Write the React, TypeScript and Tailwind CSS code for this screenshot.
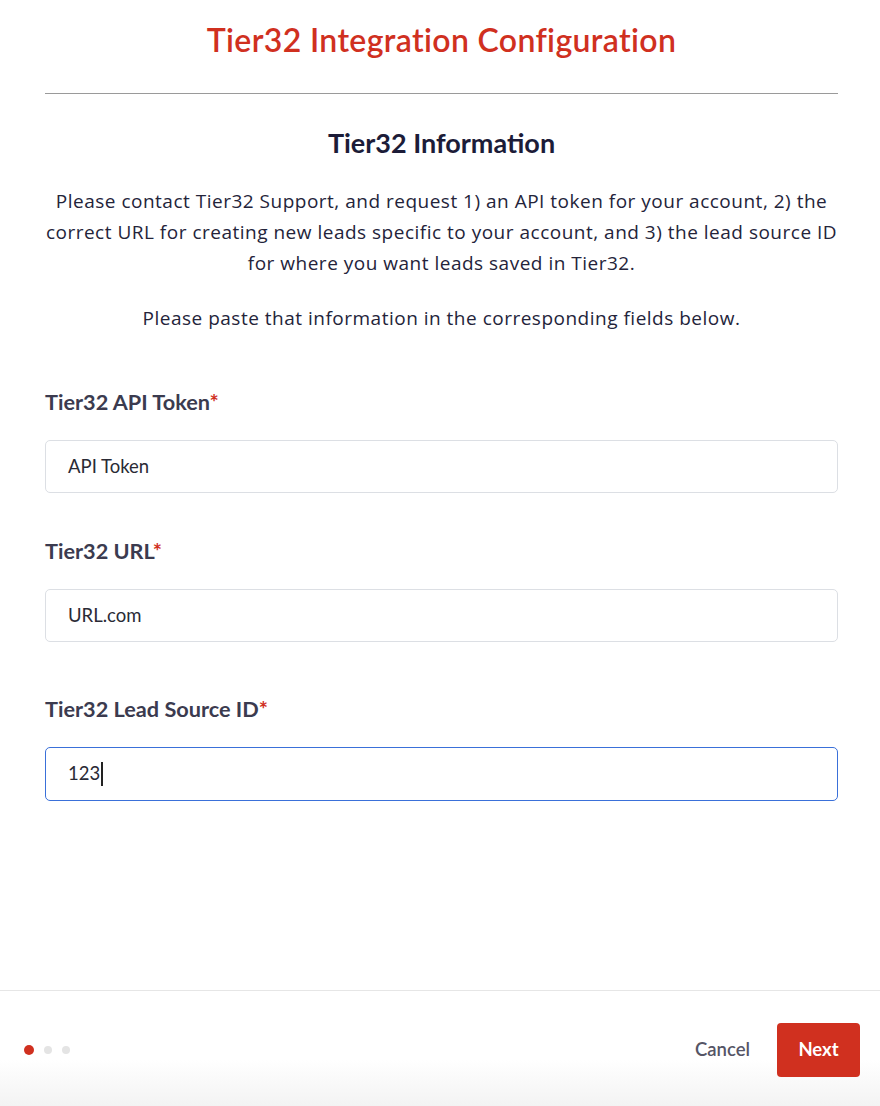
import React from "react";

const Label = ({ text }: { text: string }) => (
  <label className="text-[21.7px] font-bold text-[#3b3b4f] leading-[26px]">
    {text}
    <span className="text-[#d0301f]">*</span>
  </label>
);

const Field = ({ label, value }: { label: string; value: string }) => (
  <div className="flex flex-col">
    <Label text={label} />
    <div className="mt-[25px] h-[53px] rounded-[5px] border border-[#dcdfe4] bg-white flex items-center px-[22px] text-[18.5px] text-[#2a2a35]">
      {value}
    </div>
  </div>
);

const App = () => {
  return (
    <div className="w-[880px] h-[1106px] bg-white flex flex-col font-[family-name:Lato]">
      <div className="px-[45px] pr-[42px] flex-1">
        <h1 className="pt-[20px] text-center text-[32px] tracking-[0.35px] font-semibold text-[#d0301f] leading-[40px]">
          Tier32 Integration Configuration
        </h1>
        <div className="mt-[33px] h-[1px] bg-[#9a9a9a]" />
        <h2 className="mt-[32px] text-center text-[27px] font-bold text-[#1c1c38] leading-[34px]">
          Tier32 Information
        </h2>
        <p className="mt-[26px] text-center text-[19px] tracking-[0.5px] leading-[31px] text-[#24243a] font-[family-name:Open_Sans] whitespace-nowrap">
          Please contact Tier32 Support, and request 1) an API token for your account, 2) the
          <br />
          correct URL for creating new leads specific to your account, and 3) the lead source ID
          <br />
          for where you want leads saved in Tier32.
        </p>
        <p className="mt-[24px] text-center text-[19px] tracking-[0.5px] leading-[31px] text-[#24243a] font-[family-name:Open_Sans]">
          Please paste that information in the corresponding fields below.
        </p>
        <div className="mt-[55px] flex flex-col gap-[45px]">
          <Field label="Tier32 API Token" value="API Token" />
          <Field label="Tier32 URL" value="URL.com" />
          <div className="mt-[9px] flex flex-col">
            <Label text="Tier32 Lead Source ID" />
            <div className="mt-[25px] h-[54px] rounded-[5px] border border-[#3a70d9] bg-white flex items-center px-[22px] text-[18.5px] text-[#2a2a35]">
              <span>123</span>
              <span className="ml-[1px] w-[2px] h-[24px] bg-[#222]" />
            </div>
          </div>
        </div>
      </div>
      <div className="h-[116px] border-t border-[#e6e6e6] bg-gradient-to-b from-white from-[60%] to-[#f3f3f3] flex items-center justify-between pl-[24px] pr-[20px] pt-[2px]">
        <div className="flex items-center gap-[10px]">
          <span className="w-[10px] h-[10px] rounded-full bg-[#d0301f]" />
          <span className="w-[8px] h-[8px] rounded-full bg-[#e4e4e4]" />
          <span className="w-[8px] h-[8px] rounded-full bg-[#e4e4e4]" />
        </div>
        <div className="flex items-center gap-[27px]">
          <button className="text-[18.5px] font-semibold text-[#555566]">Cancel</button>
          <button className="w-[83px] h-[54px] rounded-[4px] bg-[#d0301f] text-white text-[18.5px] font-bold">
            Next
          </button>
        </div>
      </div>
    </div>
  );
};

export default App;
